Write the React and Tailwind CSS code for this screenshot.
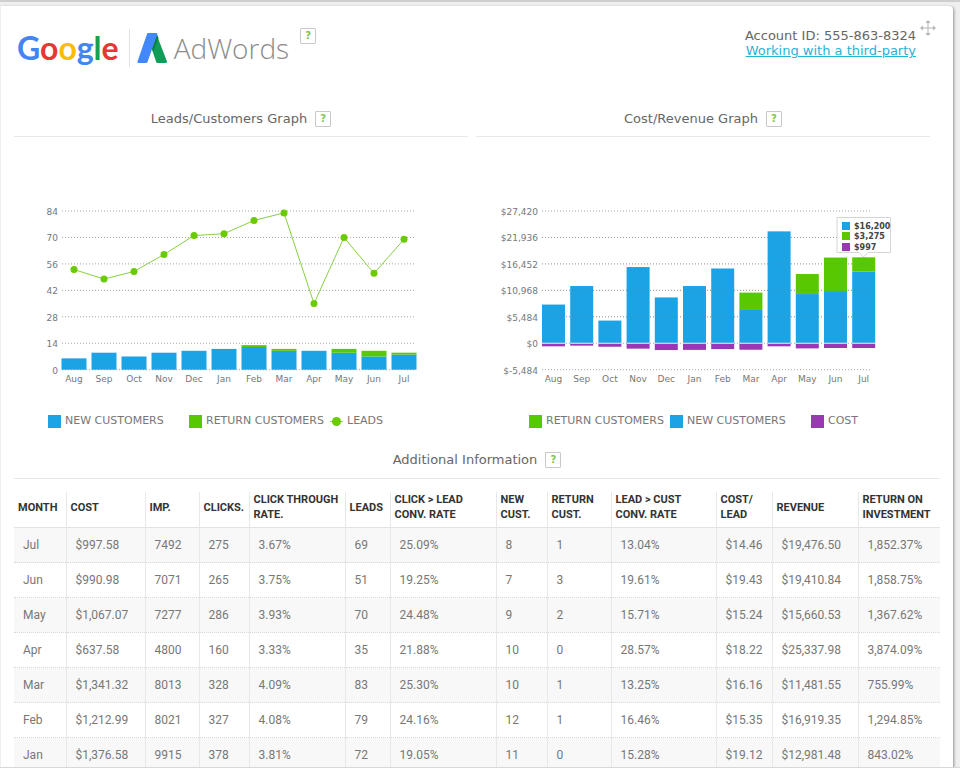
import React from 'react';

const months = ['Aug', 'Sep', 'Oct', 'Nov', 'Dec', 'Jan', 'Feb', 'Mar', 'Apr', 'May', 'Jun', 'Jul'];

const leads = [53, 48, 52, 61, 71, 72, 79, 83, 35, 70, 51, 69];
const newCustomers = [6, 9, 7, 9, 10, 11, 12, 10, 10, 9, 7, 8];
const returnCustomers = [0, 0, 0, 0, 0, 0, 1, 1, 0, 2, 3, 1];

const newRevenue = [8020, 11860, 4700, 15800, 9500, 11860, 15500, 6900, 23200, 10200, 10820, 14870];
const returnRevenue = [0, 0, 0, 0, 0, 0, 0, 3600, 0, 4150, 6950, 2950];
const cost = [640, 500, 720, 1120, 1410, 1376, 1212, 1341, 637, 1067, 990, 997];

const columns = [
  { label: 'MONTH', width: 'w-[52px]' },
  { label: 'COST', width: 'w-[79px]' },
  { label: 'IMP.', width: 'w-[54px]' },
  { label: 'CLICKS.', width: 'w-[50px]' },
  { label: 'CLICK THROUGH\nRATE.', width: 'w-[96px]' },
  { label: 'LEADS', width: 'w-[45px]' },
  { label: 'CLICK > LEAD\nCONV. RATE', width: 'w-[106px]' },
  { label: 'NEW\nCUST.', width: 'w-[51px]' },
  { label: 'RETURN\nCUST.', width: 'w-[64px]' },
  { label: 'LEAD > CUST\nCONV. RATE', width: 'w-[105px]' },
  { label: 'COST/\nLEAD', width: 'w-[56px]' },
  { label: 'REVENUE', width: 'w-[86px]' },
  { label: 'RETURN ON\nINVESTMENT', width: 'w-[82px]' },
];

const rows = [
  ['Jul', '$997.58', '7492', '275', '3.67%', '69', '25.09%', '8', '1', '13.04%', '$14.46', '$19,476.50', '1,852.37%'],
  ['Jun', '$990.98', '7071', '265', '3.75%', '51', '19.25%', '7', '3', '19.61%', '$19.43', '$19,410.84', '1,858.75%'],
  ['May', '$1,067.07', '7277', '286', '3.93%', '70', '24.48%', '9', '2', '15.71%', '$15.24', '$15,660.53', '1,367.62%'],
  ['Apr', '$637.58', '4800', '160', '3.33%', '35', '21.88%', '10', '0', '28.57%', '$18.22', '$25,337.98', '3,874.09%'],
  ['Mar', '$1,341.32', '8013', '328', '4.09%', '83', '25.30%', '10', '1', '13.25%', '$16.16', '$11,481.55', '755.99%'],
  ['Feb', '$1,212.99', '8021', '327', '4.08%', '79', '24.16%', '12', '1', '16.46%', '$15.35', '$16,919.35', '1,294.85%'],
  ['Jan', '$1,376.58', '9915', '378', '3.81%', '72', '19.05%', '11', '0', '15.28%', '$19.12', '$12,981.48', '843.02%'],
];

// plot area shared by both charts
const TOP = 74;
const STEP = 26.45;
const BOTTOM = TOP + STEP * 6;

function HelpButton({ topic }) {
  return (
    <button
      type="button"
      aria-label={`Help: ${topic}`}
      className="flex h-4 w-4 items-center justify-center rounded-[1px] border border-[#c9c9c9] bg-white font-['DejaVu_Sans',sans-serif] text-[10px] leading-none font-bold text-[#7cc653]"
    >
      ?
    </button>
  );
}

function SectionTitle({ children }) {
  return (
    <div className="flex h-9 items-center justify-center gap-2 border-b border-[#e8e8e8]">
      <h2 className="text-[13px] text-[#666]">{children}</h2>
      <HelpButton topic={children} />
    </div>
  );
}

function Logo() {
  return (
    <div className="flex items-start">
      <div className="flex items-center">
        <span className="font-[Lato,sans-serif] text-[32px] leading-10 font-bold">
          <span className="text-[#4285f4]">G</span>
          <span className="text-[#ea3535]">o</span>
          <span className="text-[#fbbc05]">o</span>
          <span className="text-[#4285f4]">g</span>
          <span className="text-[#1a9f50]">l</span>
          <span className="text-[#ea3535]">e</span>
        </span>
        <span className="mr-[7px] ml-[10px] h-[38px] w-px bg-[#e2e2e2]" />
        <svg className="h-[30px] w-[30px]" viewBox="0 0 30 30" aria-hidden="true">
          <path d="M19 0 L30 28.500 Q30 30 28.500 30 H20.500 Q19.500 30 19.200 29 L14.500 15 Z" fill="#0f9d58" />
          <path d="M15 13 L20 1 L21.500 5 L16 19 Z" fill="#0a8043" />
          <path d="M11 0 H19.500 Q20.500 0 20.200 1.500 L10.500 29 Q10 30 9 30 H1.500 Q0 30 0.500 28.500 L10 1 Q10.300 0 11 0 Z" fill="#4387fd" />
        </svg>
        <span className="ml-[7px] font-['Open_Sans',sans-serif] text-[28px] leading-10 font-light text-[#8c8c8c]">AdWords</span>
      </div>
      <div className="ml-[11px]">
        <HelpButton topic="AdWords" />
      </div>
    </div>
  );
}

function GridLines({ labels, x1, x2 }) {
  return labels.map((label, i) => (
    <g key={label}>
      <line x1={x1} x2={x2} y1={TOP + STEP * i} y2={TOP + STEP * i} stroke="#a5a5a5" strokeWidth="1" strokeDasharray="1 2" />
      <text x={x1 - 4} y={TOP + STEP * i + 4} textAnchor="end">{label}</text>
    </g>
  ));
}

function LeadsChart() {
  const scale = (STEP * 6) / 84;
  const center = (i) => 60 + i * 30;
  const y = (value) => BOTTOM - value * scale;

  return (
    <svg viewBox="0 0 454 256" className="block w-full" fontSize="9" fill="#777" role="img" aria-label="Leads and customers by month">
      <GridLines labels={['84', '70', '56', '42', '28', '14', '0']} x1={48} x2={402} />
      {months.map((month, i) => (
        <g key={month}>
          <rect x={center(i) - 12.5} y={y(newCustomers[i])} width="25" height={newCustomers[i] * scale} fill="#1ca3e6" />
          <rect x={center(i) - 12.5} y={y(newCustomers[i] + returnCustomers[i])} width="25" height={returnCustomers[i] * scale} fill="#57c902" />
          <text x={center(i)} y={BOTTOM + 12} textAnchor="middle">{month}</text>
        </g>
      ))}
      <polyline points={leads.map((value, i) => `${center(i)},${y(value)}`).join(' ')} fill="none" stroke="#86cf4a" strokeWidth="1" />
      {leads.map((value, i) => (
        <circle key={months[i]} cx={center(i)} cy={y(value)} r="3.5" fill="#6acb04" />
      ))}
    </svg>
  );
}

function RevenueChart() {
  const scale = STEP / 5484;
  const zero = TOP + STEP * 5;
  const center = (i) => 77.5 + i * 28.2;
  const y = (value) => zero - value * scale;

  return (
    <svg viewBox="0 0 454 256" className="block w-full" fontSize="9" fill="#777" role="img" aria-label="Cost and revenue by month">
      <GridLines labels={['$27,420', '$21,936', '$16,452', '$10,968', '$5,484', '$0', '$-5,484']} x1={66} x2={396} />
      {months.map((month, i) => (
        <g key={month}>
          <rect x={center(i) - 11.5} y={y(newRevenue[i])} width="23" height={newRevenue[i] * scale} fill="#1ca3e6" />
          <rect x={center(i) - 11.5} y={y(newRevenue[i] + returnRevenue[i])} width="23" height={returnRevenue[i] * scale} fill="#57c902" />
          <rect x={center(i) - 11.5} y={zero} width="23" height={cost[i] * scale} fill="#9a38b3" />
          <rect x={center(i) - 11.5} y={zero - 0.5} width="23" height="1" fill="#e4eef4" />
          <text x={center(i)} y={BOTTOM + 12} textAnchor="middle">{month}</text>
        </g>
      ))}
      {[1, 2, 3, 4].map((i) => (
        <line key={i} x1="66" x2="396" y1={TOP + STEP * i} y2={TOP + STEP * i} stroke="#777" strokeOpacity="0.3" strokeDasharray="1 2" />
      ))}
      <path d="M361 80.500 H414.500 V115.500 H392 L387.500 120 L383 115.500 H361 Z" fill="#fff" stroke="#d6d6d6" />
      <g fontSize="8" fontWeight="bold" fill="#444">
        <rect x="366" y="85" width="8" height="8" fill="#1ca3e6" />
        <text x="378" y="92">$16,200</text>
        <rect x="366" y="95" width="8" height="8" fill="#57c902" />
        <text x="378" y="102">$3,275</text>
        <rect x="366" y="106" width="8" height="8" fill="#9a38b3" />
        <text x="378" y="113">$997</text>
      </g>
    </svg>
  );
}

function LegendItem({ color, children }) {
  return (
    <li className="flex w-[141px] shrink-0 items-center gap-1 whitespace-nowrap last:w-auto">
      {color ? (
        <span className={`h-[13px] w-[13px] shrink-0 ${color}`} />
      ) : (
        <svg className="h-[13px] w-[13px] shrink-0" viewBox="0 0 13 13" aria-hidden="true">
          <path d="M0 6.500 H13" stroke="#86cf4a" />
          <circle cx="6.500" cy="6.500" r="4.500" fill="#6acb04" />
        </svg>
      )}
      {children}
    </li>
  );
}

function App() {
  return (
    <div className="h-screen overflow-hidden border-t-2 border-b border-t-[#cfcfcf] border-b-[#d8d8d8] bg-[#efefef] pt-1 pr-[7px] font-['DejaVu_Sans',Verdana,sans-serif]">
      <main className="min-h-full rounded-tr-sm border-l border-[#eee] bg-white pr-[13px] pl-[13px] shadow-[1px_1px_3px_rgba(0,0,0,0.4)]">
        <header className="flex items-start justify-between pt-[14px] pr-1 pl-[3px]">
          <div className="pt-2">
            <Logo />
          </div>
          <div className="flex items-start">
            <div className="pt-2 text-right text-[13px] leading-[15px]">
              <p className="text-[#666]">Account ID: 555-863-8324</p>
              <a href="#third-party" className="text-[#1fb5d3] underline">Working with a third-party</a>
            </div>
            <button type="button" aria-label="Move widget" className="ml-1">
              <svg className="h-4 w-4" viewBox="0 0 16 16" fill="none" stroke="#b5b5b5" aria-hidden="true">
                <path d="M8 1 V15 M1 8 H15" />
                <path d="M8 0 L10.500 3 H5.500 Z M8 16 L10.500 13 H5.500 Z M0 8 L3 5.500 V10.500 Z M16 8 L13 5.500 V10.500 Z" fill="#b5b5b5" stroke="none" />
              </svg>
            </button>
          </div>
        </header>

        <div className="mt-[33px] grid grid-cols-2 gap-2 pr-[10px]">
          <section>
            <SectionTitle>Leads/Customers Graph</SectionTitle>
            <LeadsChart />
            <ul className="mt-5 flex pl-[34px] text-[11px] text-[#777]">
              <LegendItem color="bg-[#1ca3e6]">NEW CUSTOMERS</LegendItem>
              <LegendItem color="bg-[#57c902]">RETURN CUSTOMERS</LegendItem>
              <LegendItem>LEADS</LegendItem>
            </ul>
          </section>
          <section>
            <SectionTitle>Cost/Revenue Graph</SectionTitle>
            <RevenueChart />
            <ul className="mt-5 flex pl-[53px] text-[11px] text-[#777]">
              <LegendItem color="bg-[#57c902]">RETURN CUSTOMERS</LegendItem>
              <LegendItem color="bg-[#1ca3e6]">NEW CUSTOMERS</LegendItem>
              <LegendItem color="bg-[#9a38b3]">COST</LegendItem>
            </ul>
          </section>
        </div>

        <section className="mt-[13px]">
          <SectionTitle>Additional Information</SectionTitle>
          <table className="mt-[13px] w-full table-fixed border-collapse text-left font-[Roboto,sans-serif] text-[12px]">
            <colgroup>
              {columns.map((column) => (
                <col key={column.label} className={column.width} />
              ))}
            </colgroup>
            <thead>
              <tr className="h-9 border-b border-[#e3e3e3]">
                {columns.map((column) => (
                  <th key={column.label} scope="col" className="border-l border-[#e8e8e8] pb-1 pl-1 text-[11px] leading-[15px] font-bold whitespace-pre text-[#333] first:border-l-0">
                    {column.label}
                  </th>
                ))}
              </tr>
            </thead>
            <tbody>
              {rows.map((row) => (
                <tr key={row[0]} className="h-[35px] odd:bg-[#f8f8f8]">
                  {row.map((cell, i) => (
                    <td key={columns[i].label} className="border-b border-l border-b-[#d9d9d9] border-l-[#e8e8e8] pl-[9px] text-[#777] [border-bottom-style:dotted] first:border-l-0">
                      {cell}
                    </td>
                  ))}
                </tr>
              ))}
            </tbody>
          </table>
        </section>
      </main>
    </div>
  );
}

export default App;
